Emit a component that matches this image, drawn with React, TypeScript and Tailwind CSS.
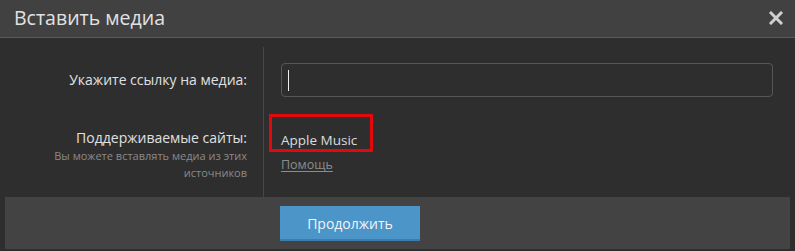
import React from "react";

export default function App() {
  return (
    <div className="w-[795px] h-[251px] bg-[#2e2e2e] overflow-hidden font-['Open_Sans',sans-serif] flex flex-col">
      <div className="h-[38px] shrink-0 bg-[#414141] border-b border-[#5c5c5c] flex items-center justify-between pl-[14px] pr-[12px]">
        <span className="text-[19.5px] leading-[24px] text-[#e2e2e2] -mt-[1px]">Вставить медиа</span>
        <svg width="14" height="14" viewBox="0 0 14 14" className="-mt-[1px]">
          <path d="M2 2 L12 12 M12 2 L2 12" stroke="#cfcfcf" strokeWidth="3" strokeLinecap="square" />
        </svg>
      </div>
      <div className="flex pt-[9px] h-[159px] shrink-0">
        <div className="w-[264px] shrink-0 border-r border-[#474747] pr-[16px] pt-[23px] text-right">
          <div className="text-[14px] leading-[20px] text-[#e0e0e0]">Укажите ссылку на медиа:</div>
          <div className="mt-[38px] text-[14px] leading-[20px] text-[#e0e0e0]">Поддерживаемые сайты:</div>
          <div className="text-[11px] leading-[16.5px] text-[#8a8a8a]">
            Вы можете вставлять медиа из этих
            <br />
            источников
          </div>
        </div>
        <div className="flex-1 pl-[17px] pr-[22px] pt-[16px]">
          <div className="h-[34px] rounded-[4px] border border-[#565656] bg-[#2e2e2e] flex items-center pl-[6px]">
            <div className="w-[1px] h-[21px] bg-[#f0f0f0]" />
          </div>
          <div className="relative mt-[34px] text-[13.5px] leading-[18px] text-[#dcdcdc]">
            Apple Music
            <div className="absolute -left-[12px] -top-[17px] w-[104px] h-[38px] border-[3px] border-[#e3080c]" />
          </div>
          <div className="mt-[7px] text-[12.5px] leading-[18px] text-[#8c8c8c] underline underline-offset-2">Помощь</div>
        </div>
      </div>
      <div className="mx-[5px] h-[52px] shrink-0 bg-[#434343] pl-[275px] pt-[9px]">
        <button className="w-[140px] h-[35px] bg-[#4b95c9] border-b-2 border-[#3d7eb0] text-[14px] text-[#f4f4f4] flex items-center justify-center pt-[1px]">
          Продолжить
        </button>
      </div>
    </div>
  );
}
